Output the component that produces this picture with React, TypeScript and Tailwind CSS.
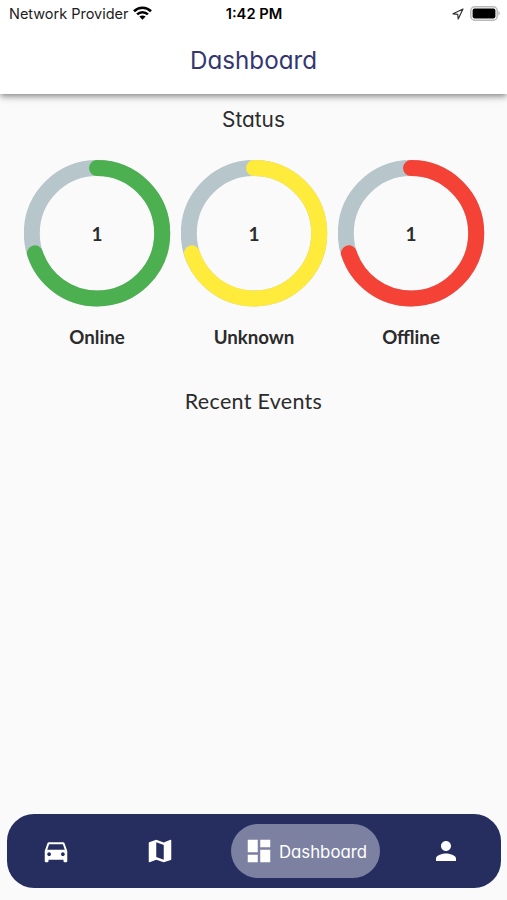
import clsx from "clsx";
import { IconType } from "react-icons";
import { MdDashboard, MdDirectionsCar, MdMap, MdPerson } from "react-icons/md";

const statuses = [
  { label: "Online", count: 1, stroke: "#4caf50" },
  { label: "Unknown", count: 1, stroke: "#ffeb3b" },
  { label: "Offline", count: 1, stroke: "#f44336" },
];

const StatusBar = () => {
  return (
    <div className="grid h-7 grid-cols-3 items-center pl-[9px] pr-[7px] text-black">
      <div className="flex items-center gap-[5px]">
        <span className="whitespace-nowrap text-[14.5px] leading-none tracking-[-0.02px] text-[#1c1c1c]">
          Network Provider
        </span>
        <svg className="-mt-0.5 h-[14px] w-[19px] shrink-0" viewBox="0 0 19 14">
          <g fill="none" stroke="currentColor" strokeWidth="2.6">
            <path d="M1 5.2C5.8.6 13.2.6 18 5.2" />
            <path d="M4.1 8.4c3-2.9 7.8-2.9 10.8 0" />
          </g>
          <path d="M9.5 13.7 6.4 10.6c1.8-1.5 4.4-1.5 6.2 0z" fill="currentColor" />
        </svg>
      </div>
      <span className="-ml-px text-center text-[14.7px] font-semibold leading-none">1:42 PM</span>
      <div className="flex items-center justify-end gap-[6px]">
        <svg className="h-3 w-3" viewBox="0 0 12 12">
          <path
            d="M11 1 1 5.8l4.7.5.5 4.7z"
            fill="none"
            stroke="#333"
            strokeWidth="1.2"
            strokeLinejoin="round"
          />
        </svg>
        <svg className="-mt-0.5 h-[15px] w-[30px]" viewBox="0 0 30 15">
          <rect x=".8" y=".8" width="26.4" height="13.4" rx="4" fill="#fff" stroke="#b9b9b9" strokeWidth="1.5" />
          <rect x="2.6" y="2.6" width="22.8" height="9.8" rx="1.8" fill="#000" />
          <path d="M28.4 5v4.6c1.8-.8 1.8-3.8 0-4.6z" fill="#b5b5b5" />
        </svg>
      </div>
    </div>
  );
};

const StatusRing = ({ label, count, stroke }: { label: string; count: number; stroke: string }) => {
  return (
    <div className="flex w-[157px] flex-col items-center">
      <div className="grid h-[147px] w-[147px] place-items-center">
        <svg className="col-start-1 row-start-1 h-full w-full -rotate-90" viewBox="0 0 147 147">
          <g fill="none" strokeWidth="16">
            <circle cx="73.7" cy="73" r="65.2" stroke="#b7c6cb" />
            <circle
              cx="73.7"
              cy="73"
              r="65.2"
              pathLength="100"
              stroke={stroke}
              strokeDasharray="70 100"
              strokeLinecap="round"
            />
          </g>
        </svg>
        <span className="col-start-1 row-start-1 font-['Lato',sans-serif] text-[19px] font-bold leading-none">
          {count}
        </span>
      </div>
      <span className="mt-[18px] font-['Lato',sans-serif] text-[18.7px] font-bold leading-6">
        {label}
      </span>
    </div>
  );
};

const NavItem = ({ icon: Icon, label, active }: { icon: IconType; label: string; active?: boolean }) => {
  return (
    <button
      aria-label={label}
      className={clsx(
        "flex h-[54px] items-center justify-center text-white",
        active ? "w-[149px] gap-[5px] rounded-[27px] bg-[#7c81a1]" : "w-[60px]"
      )}
    >
      <Icon className="h-[30px] w-[30px] shrink-0" />
      {active && <span className="mt-px text-[16.8px] leading-6">{label}</span>}
    </button>
  );
};

const App = () => {
  return (
    <div className="flex h-[900px] w-[507px] flex-col overflow-hidden bg-[#fafafa] font-['Inter',sans-serif] text-[#2b2b2b] [font-feature-settings:'cv11']">
      <header className="h-[94px] shrink-0 bg-white shadow-[0_2px_5px_-1px_rgba(0,0,0,0.3),0_4px_6px_rgba(0,0,0,0.17),0_1px_12px_rgba(0,0,0,0.1)]">
        <StatusBar />
        <h1 className="mt-[17px] text-center text-[24.2px] leading-8 text-[#34376f]">Dashboard</h1>
      </header>

      <main className="flex-1">
        <h2 className="mt-3 text-center text-[20.8px] leading-7">Status</h2>
        <div className="mt-[26px] flex justify-center pl-px">
          {statuses.map((status) => (
            <StatusRing key={status.label} {...status} />
          ))}
        </div>
        <h2 className="mt-[38px] text-center font-['Lato',sans-serif] text-[21.5px] leading-7 tracking-[0.3px]">
          Recent Events
        </h2>
      </main>

      <nav className="ml-[7px] mr-1.5 mb-3 flex h-[74px] shrink-0 items-center rounded-[27px] bg-[#262e60] pl-[19px] pr-[25px]">
        <NavItem icon={MdDirectionsCar} label="Vehicles" />
        <div className="ml-[44px] mr-[41px]">
          <NavItem icon={MdMap} label="Map" />
        </div>
        <NavItem icon={MdDashboard} label="Dashboard" active />
        <div className="ml-auto">
          <NavItem icon={MdPerson} label="Account" />
        </div>
      </nav>
    </div>
  );
};

export default App;
